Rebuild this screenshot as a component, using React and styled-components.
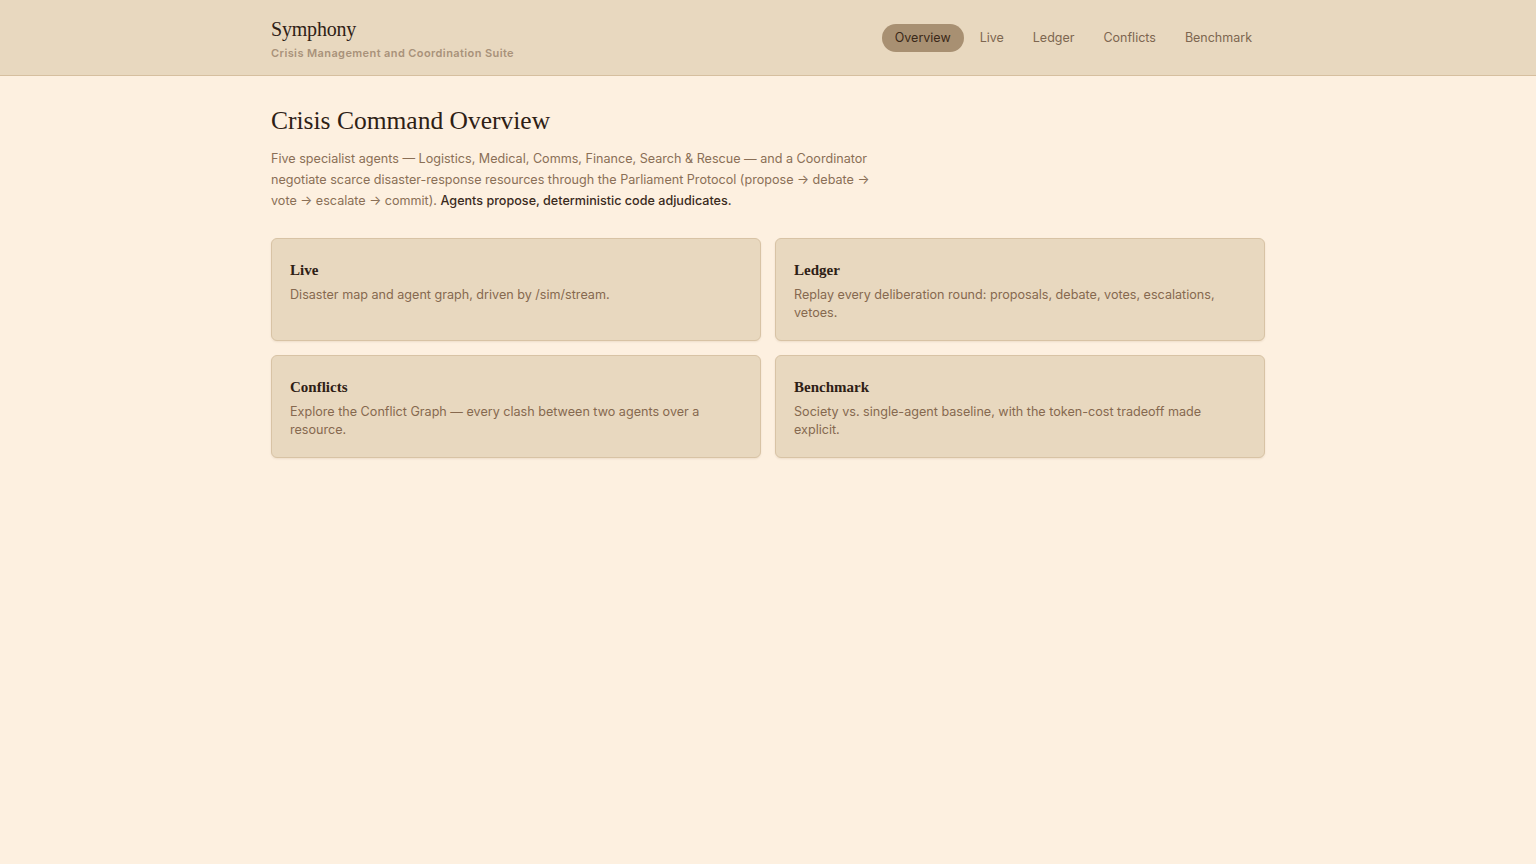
import React from "react"
import styled, { createGlobalStyle } from "styled-components"

const GlobalStyle = createGlobalStyle`
  html, body {
    margin: 0;
    padding: 0;
    background: #fdf0e0;
    font-family: Inter, "Noto Sans", sans-serif;
    color: #3a2a1c;
  }
  #root {
    min-height: 100vh;
  }
`

const serif = `"Liberation Serif", "DejaVu Serif", serif`

const NAV = ["Overview", "Live", "Ledger", "Conflicts", "Benchmark"]

const CARDS = [
  { id: 1, title: "Live", text: "Disaster map and agent graph, driven by /sim/stream." },
  {
    id: 2,
    title: "Ledger",
    text: "Replay every deliberation round: proposals, debate, votes, escalations, vetoes.",
  },
  {
    id: 3,
    title: "Conflicts",
    text: "Explore the Conflict Graph — every clash between two agents over a resource.",
  },
  {
    id: 4,
    title: "Benchmark",
    text: "Society vs. single-agent baseline, with the token-cost tradeoff made explicit.",
  },
]

export default function App() {
  return (
    <>
      <GlobalStyle />
      <Header>
        <Inner>
          <Brand>
            <BrandName>Symphony</BrandName>
            <BrandTag>Crisis Management and Coordination Suite</BrandTag>
          </Brand>
          <Nav>
            {NAV.map(item => (
              <NavLink key={item} $active={item === "Overview"}>
                {item}
              </NavLink>
            ))}
          </Nav>
        </Inner>
      </Header>
      <Main>
        <Title>Crisis Command Overview</Title>
        <Lead>
          Five specialist agents — Logistics, Medical, Comms, Finance, Search &amp; Rescue — and a
          Coordinator negotiate scarce disaster-response resources through the Parliament Protocol
          (propose → debate → vote → escalate → commit).{" "}
          <Emph>Agents propose, deterministic code adjudicates.</Emph>
        </Lead>
        <Grid>
          {CARDS.map(card => (
            <Card key={card.id}>
              <CardTitle>{card.title}</CardTitle>
              <CardText>{card.text}</CardText>
            </Card>
          ))}
        </Grid>
      </Main>
    </>
  )
}

const Header = styled.header`
  background: #e8d8bf;
  border-bottom: 1px solid #d6bf9f;
  height: 75px;
`

const Inner = styled.div`
  width: 994px;
  height: 100%;
  margin: 0 auto;
  display: flex;
  align-items: center;
  justify-content: space-between;
`

const Brand = styled.div`
  display: flex;
  flex-direction: column;
  gap: 5px;
`

const BrandName = styled.div`
  font-family: ${serif};
  font-size: 20px;
  line-height: 26px;
  color: #2e2015;
  letter-spacing: -0.2px;
`

const BrandTag = styled.div`
  font-size: 11px;
  line-height: 13px;
  font-weight: 600;
  letter-spacing: 0.4px;
  color: #a8927a;
`

const Nav = styled.nav`
  display: flex;
  align-items: center;
  gap: 3px;
`

const NavLink = styled.a`
  font-size: 12.5px;
  line-height: 28px;
  padding: 0 13px;
  border-radius: 14px;
  cursor: pointer;
  color: ${p => (p.$active ? "#3a2818" : "#7d6650")};
  background: ${p => (p.$active ? "#a89072" : "transparent")};
`

const Main = styled.main`
  width: 994px;
  margin: 0 auto;
  padding-top: 28px;
`

const Title = styled.h1`
  font-family: ${serif};
  font-weight: 400;
  font-size: 25.5px;
  line-height: 34px;
  margin: 0;
  color: #2e2015;
`

const Lead = styled.p`
  margin: 10px 0 0;
  max-width: 602px;
  font-size: 12.6px;
  line-height: 21px;
  color: #8a6f56;
`

const Emph = styled.strong`
  font-weight: 500;
  color: #3a2a1c;
`

const Grid = styled.div`
  display: grid;
  grid-template-columns: 1fr 1fr;
  gap: 14px;
  margin-top: 27px;
`

const Card = styled.div`
  background: #e8d8bf;
  border: 1px solid #d8c3a5;
  border-radius: 6px;
  padding: 21px 18px 18px;
  box-shadow: 0 1px 2px rgba(120, 90, 50, 0.12);
`

const CardTitle = styled.div`
  font-family: ${serif};
  font-weight: 700;
  font-size: 15px;
  line-height: 20px;
  color: #2e2015;
`

const CardText = styled.div`
  margin-top: 6px;
  font-size: 12.6px;
  line-height: 18px;
  color: #86694f;
`
